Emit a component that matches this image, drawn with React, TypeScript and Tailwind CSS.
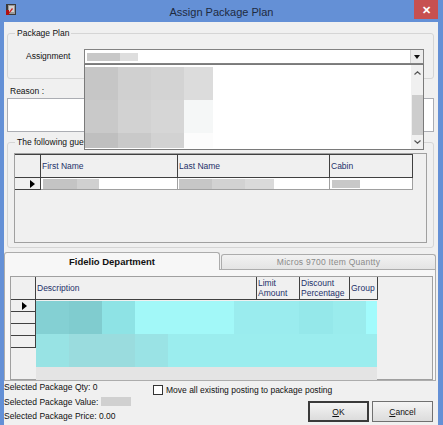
import React from "react";

const font = "font-['Liberation_Sans',Arial,sans-serif]";

const listRows = [
  { h: 33, cells: ["#c6c6c6", "#d0d0d0", "#d3d3d3", "#dcdcdc"] },
  { h: 33, cells: ["#c9c9c9", "#d2d2d2", "#d6d6d6", "#f5f7f7"] },
  { h: 15, cells: ["#bfbfbf", "#c9c9c9", "#d2d2d2", "#fcfcfc"] },
];
const listWidths = [33, 33, 33, 29];

const cyanRows = [
  [
    { w: 33, c: "#84d0d3" },
    { w: 33, c: "#80cccf" },
    { w: 33, c: "#8ee3e5" },
    { w: 99, c: "#a2f8f8" },
    { w: 65, c: "#9aecee" },
    { w: 34, c: "#95e8ea" },
    { w: 33, c: "#9aeced" },
    { w: 11, c: "#a2fbfc" },
  ],
  [
    { w: 33, c: "#98e3e4" },
    { w: 66, c: "#9adcde" },
    { w: 33, c: "#9ae3e5" },
    { w: 209, c: "#9bedee" },
  ],
];

function Arrow() {
  return (
    <svg width="5" height="8" viewBox="0 0 5 8">
      <path d="M0 0 L5 4 L0 8 Z" fill="#000" />
    </svg>
  );
}

function WindowIcon() {
  return (
    <svg width="13" height="13" viewBox="0 0 13 13">
      <rect x="1" y="1" width="10" height="11" fill="#3a3a3a" />
      <rect x="3" y="2" width="7" height="9" fill="#9a9a9a" />
      <rect x="4" y="3" width="5" height="6" fill="#d0d0d0" />
      <path d="M2 12 L7 5 L8 6 L3 12 Z" fill="#d01818" />
      <rect x="1" y="7" width="3" height="5" fill="#b01010" />
    </svg>
  );
}

export default function App() {
  return (
    <div className={`w-[443px] h-[425px] overflow-hidden bg-[#6490d6] flex flex-col text-[8.5px] leading-[10px] text-[#111] ${font}`}>
      {/* title bar */}
      <div className="h-[22px] shrink-0 grid grid-cols-[40px_1fr_40px]">
        <div className="pl-[5px] pt-[3px]">
          <WindowIcon />
        </div>
        <div className="text-center text-[11px] leading-[22px] text-[#1e2a40] pt-px">Assign Package Plan</div>
        <div className="flex justify-end">
          <div className="w-[24px] h-[19px] mr-[5px] bg-[#c75050] flex items-center justify-center text-white text-[11px] font-bold">
            ✕
          </div>
        </div>
      </div>

      {/* client area */}
      <div className="ml-[4px] mr-[5px] flex-1 bg-[#f0f0f0] flex flex-col">
        {/* Package Plan group */}
        <fieldset className="mt-[6px] ml-[3px] mr-[4px] border border-[#d5d5d5] rounded-[3px] pb-[14px]">
          <legend className="ml-[7px] px-[2px] leading-[10px]">Package Plan</legend>
          <div className="flex mt-[11px]">
            <div className="w-[76px] pl-[18px] leading-[15px]">Assignment</div>
            <div className="relative w-[340px] h-[15px] bg-white border border-[#828282] flex">
              <div className="flex-1 flex items-center pl-[2px]">
                <div className="w-[33px] h-[8px] bg-[#c8c8c8]" />
                <div className="w-[18px] h-[8px] bg-[#dedede]" />
              </div>
              <div className="w-[13px] h-[13px] bg-[#ececec] border-l border-[#d0d0d0] flex items-center justify-center">
                <svg width="6" height="4" viewBox="0 0 6 4">
                  <path d="M0 0 L6 0 L3 4 Z" fill="#111" />
                </svg>
              </div>
              {/* open dropdown list */}
              <div className="absolute left-[-1px] top-[14px] w-[340px] h-[86px] bg-white border border-[#7a7a7a] flex z-10">
                <div className="flex-1 pt-[2px] flex flex-col">
                  {listRows.map((r, i) => (
                    <div key={i} className="flex" style={{ height: r.h }}>
                      {r.cells.map((c, j) => (
                        <div key={j} style={{ width: listWidths[j], background: c }} />
                      ))}
                    </div>
                  ))}
                </div>
                <div className="w-[12px] bg-[#f0f0f0] flex flex-col items-center">
                  <div className="h-[16px] flex items-center">
                    <svg width="7" height="4" viewBox="0 0 7 4">
                      <path d="M0.5 3.5 L3.5 0.8 L6.5 3.5" stroke="#555" strokeWidth="1.2" fill="none" />
                    </svg>
                  </div>
                  <div className="mt-[14px] w-[11px] h-[40px] bg-[#cdcdcd]" />
                  <div className="flex-1" />
                  <div className="h-[14px] flex items-center">
                    <svg width="7" height="4" viewBox="0 0 7 4">
                      <path d="M0.5 0.5 L3.5 3.2 L6.5 0.5" stroke="#555" strokeWidth="1.2" fill="none" />
                    </svg>
                  </div>
                </div>
              </div>
            </div>
          </div>
        </fieldset>

        {/* Reason */}
        <div className="mt-[7px] ml-[6px]">Reason :</div>
        <div className="mt-[2px] ml-[3px] mr-[4px] h-[34px] bg-white border border-[#abadb3]" />

        {/* Guests group */}
        <fieldset className="mt-[5px] ml-[3px] mr-[4px] border border-[#d5d5d5] rounded-[3px] pb-[4px]">
          <legend className="ml-[7px] px-[2px] leading-[10px]">The following guests</legend>
          <div className="mt-[6px] ml-[6px] w-[413px] h-[90px] border border-[#a0a0a0] bg-[#f0f0f0]">
            <div className="flex h-[24px] w-[398px] border-t border-b border-[#404040] text-[#24306a]">
              <div className="w-[26px] border-r border-[#404040]" />
              <div className="w-[137px] border-r border-[#404040] pl-[1px] flex items-center">First Name</div>
              <div className="w-[152px] border-r border-[#404040] pl-[1px] flex items-center">Last Name</div>
              <div className="w-[83px] border-r border-[#404040] pl-[1px] flex items-center">Cabin</div>
            </div>
            <div className="flex h-[12px] w-[398px]">
              <div className="w-[26px] border-r border-b border-[#404040] flex items-center justify-end pr-[5px]">
                <Arrow />
              </div>
              <div className="w-[137px] bg-white border-r border-b border-[#a0a0a0] flex items-center pl-[2px]">
                <div className="w-[34px] h-[10px] bg-[#c4c4c4]" />
                <div className="w-[22px] h-[10px] bg-[#d0d0d0]" />
              </div>
              <div className="w-[152px] bg-white border-r border-b border-[#a0a0a0] flex items-center pl-[1px]">
                <div className="w-[33px] h-[10px] bg-[#c6c6c6]" />
                <div className="w-[33px] h-[10px] bg-[#d2d2d2]" />
                <div className="w-[29px] h-[10px] bg-[#dadada]" />
              </div>
              <div className="w-[83px] bg-white border-r border-b border-[#a0a0a0] flex items-center pl-[2px]">
                <div className="w-[28px] h-[8px] bg-[#c8c8c8]" />
              </div>
            </div>
          </div>
        </fieldset>

        {/* Tabs */}
        <div className="mt-[3px] mr-[2px] flex items-end h-[18px]">
          <div className="relative z-10 -mb-px w-[216px] h-[18px] bg-[#f7f7f7] border border-b-0 border-[#acacac] rounded-t-[3px] flex items-center justify-center font-bold text-[9.5px] text-[#111]">
            Fidelio Department
          </div>
          <div className="ml-px w-[215px] h-[15px] bg-gradient-to-b from-[#f2f2f2] to-[#e4e4e4] border border-b-0 border-[#acacac] rounded-t-[3px] flex items-center justify-center text-[#8a8a8a] tracking-[0.25px]">
            Micros 9700 Item Quantty
          </div>
        </div>
        <div className="mr-[2px] h-[112px] bg-[#f7f7f7] border border-[#acacac]">
          <div className="mt-[6px] ml-[5px] w-[423px] h-[104px] border border-[#a0a0a0] bg-[#f0f0f0]">
            <div className="flex h-[23px] w-[367px] border-b border-[#404040] text-[#24306a]">
              <div className="w-[25px] border-r border-[#404040]" />
              <div className="w-[221px] border-r border-[#404040] pl-[1px] flex items-center">Description</div>
              <div className="w-[43px] border-r border-[#404040] pl-[1px] pt-px">
                Limit
                <br />
                Amount
              </div>
              <div className="w-[50px] border-r border-[#404040] pl-[1px] pt-px">
                Discount
                <br />
                Percentage
              </div>
              <div className="w-[28px] border-r border-[#404040] pl-[1px] flex items-center">Group</div>
            </div>
            <div className="flex">
              <div className="w-[25px] flex flex-col">
                <div className="h-[12px] border-r border-b border-[#404040] flex items-center pl-[11px]">
                  <Arrow />
                </div>
                <div className="h-[12px] border-r border-b border-[#404040]" />
                <div className="h-[12px] border-r border-b border-[#404040]" />
                <div className="h-[12px] border-r border-b border-[#404040]" />
              </div>
              <div className="w-[342px] pt-[1px] flex flex-col">
                {cyanRows.map((row, i) => (
                  <div key={i} className="flex h-[33px]">
                    {row.map((b, j) => (
                      <div key={j} style={{ width: b.w, background: b.c }} />
                    ))}
                  </div>
                ))}
                <div className="h-[13px] w-[341px] bg-[#e4e4e4]" />
              </div>
            </div>
          </div>
        </div>

        {/* bottom area */}
        <div className="flex">
          <div className="w-[148px] leading-[14.5px] -mt-[1px]">
            <div>Selected Package Qty: 0</div>
            <div className="flex items-center">
              Selected Package Value:
              <span className="ml-[3px] inline-block w-[30px] h-[9px] bg-[#d0d0d0]" />
            </div>
            <div>Selected Package Price: 0.00</div>
          </div>
          <div className="flex-1 flex flex-col">
            <div className="mt-[4px] flex items-center">
              <div className="w-[10px] h-[10px] bg-white border border-[#333] ml-[1px]" />
              <div className="ml-[3px]">Move all existing posting to package posting</div>
            </div>
            <div className="mt-[6px] flex justify-end gap-[3px] pr-[5px]">
              <div className="w-[61px] h-[21px] border-2 border-[#3a3a3a] bg-gradient-to-b from-[#f4f4f4] to-[#dcdcdc] flex items-center justify-center">
                <span>
                  <span className="underline">O</span>K
                </span>
              </div>
              <div className="w-[61px] h-[21px] border border-[#707070] bg-gradient-to-b from-[#f4f4f4] to-[#dcdcdc] flex items-center justify-center">
                <span>
                  <span className="underline">C</span>ancel
                </span>
              </div>
            </div>
          </div>
        </div>
      </div>
    </div>
  );
}
